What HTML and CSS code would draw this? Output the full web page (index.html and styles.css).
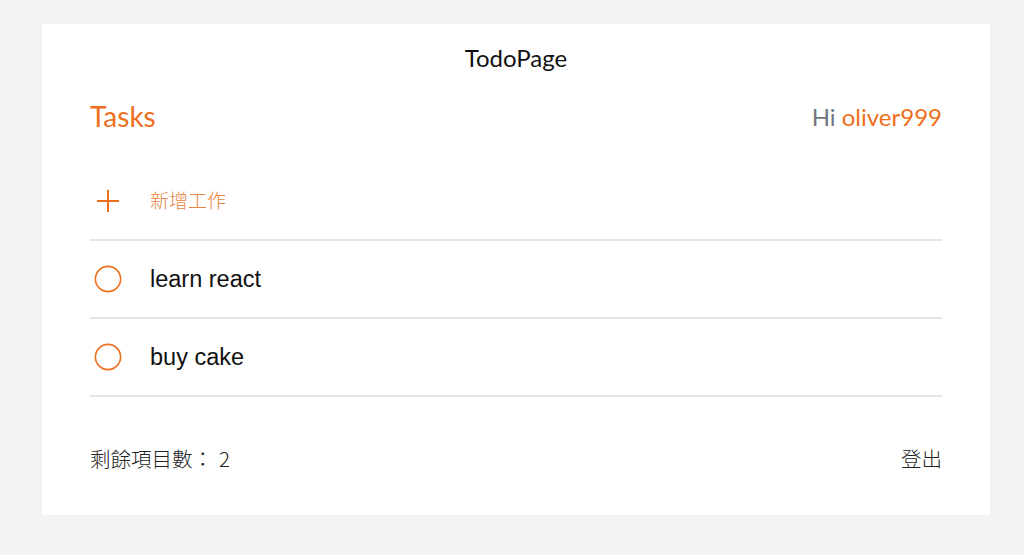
FILE: index.html
```html
<!DOCTYPE html>
<html lang="zh-Hant">
<head>
<meta charset="utf-8">
<title>TodoPage</title>
<link rel="stylesheet" href="styles.css">
</head>
<body>
<div class="card">
  <h1 class="title">TodoPage</h1>
  <div class="header">
    <span class="tasks">Tasks</span>
    <span class="greet">Hi <span class="user">oliver999</span></span>
  </div>
  <div class="row add-row">
    <span class="icon">
      <svg width="24" height="24" viewBox="0 0 24 24"><path d="M12 1V23M1 12H23" stroke="#ee6f1d" stroke-width="2" fill="none"/></svg>
    </span>
    <span class="add-text">新增工作</span>
  </div>
  <div class="row">
    <span class="icon">
      <svg width="28" height="28" viewBox="0 0 28 28"><circle cx="14" cy="14" r="12.6" stroke="#ee6f1d" stroke-width="1.6" fill="none"/></svg>
    </span>
    <span class="task-text">learn react</span>
  </div>
  <div class="row">
    <span class="icon">
      <svg width="28" height="28" viewBox="0 0 28 28"><circle cx="14" cy="14" r="12.6" stroke="#ee6f1d" stroke-width="1.6" fill="none"/></svg>
    </span>
    <span class="task-text">buy cake</span>
  </div>
  <div class="footer">
    <span>剩餘項目數：<span class="count">2</span></span>
    <span>登出</span>
  </div>
</div>
</body>
</html>
```
FILE: styles.css
```css
html, body {
  margin: 0;
  padding: 0;
  background: #f3f3f3;
}
body {
  padding: 24px 34px 40px 42px;
}
.card {
  width: 948px;
  box-sizing: border-box;
  background: #ffffff;
  padding: 0 48px 44px;
  font-family: Lato, "Noto Sans CJK TC", sans-serif;
}
.title {
  margin: 0;
  padding: 20px 0;
  line-height: 28px;
  font-size: 24px;
  font-weight: 400;
  text-align: center;
  color: #111;
}
.header {
  display: flex;
  justify-content: space-between;
  align-items: center;
  height: 48px;
  margin-bottom: 23px;
}
.tasks {
  font-size: 28px;
  color: #ee6f1d;
}
.greet {
  font-size: 24px;
  color: #6f767c;
}
.user {
  color: #ee6f1d;
}
.row {
  display: flex;
  align-items: center;
  height: 76px;
  border-bottom: 2px solid #e6e6e6;
}
.icon {
  width: 60px;
  display: flex;
  align-items: center;
  padding-left: 4px;
  box-sizing: border-box;
}
.add-row .icon {
  padding-left: 6px;
}
.add-text {
  font-family: "Noto Sans CJK TC", sans-serif;
  font-size: 19px;
  font-weight: 300;
  color: #e8843f;
  margin-top: -3px;
}
.task-text {
  font-family: "Liberation Sans", Arial, sans-serif;
  font-size: 23.5px;
  color: #111;
}
.footer {
  display: flex;
  justify-content: space-between;
  align-items: center;
  padding-top: 48px;
  line-height: 26px;
  font-family: "Noto Sans CJK TC", sans-serif;
  font-size: 20.5px;
  font-weight: 300;
  color: #222;
}
.count {
  margin-left: 6px;
}
```
